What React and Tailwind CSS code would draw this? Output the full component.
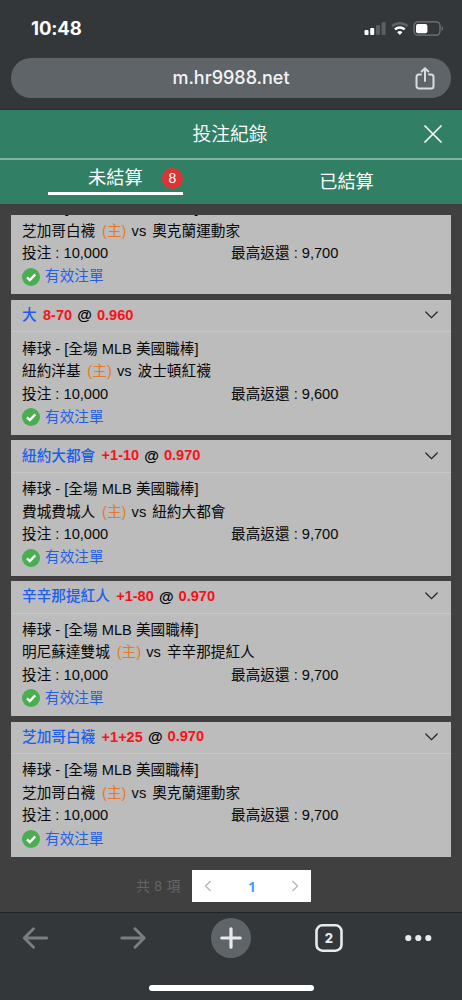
import React from 'react';

const bets = [
  { pick: '大', line: '8-70', odds: '0.960', home: '紐約洋基', away: '波士頓紅襪', max: '9,600' },
  { pick: '紐約大都會', line: '+1-10', odds: '0.970', home: '費城費城人', away: '紐約大都會', max: '9,700' },
  { pick: '辛辛那提紅人', line: '+1-80', odds: '0.970', home: '明尼蘇達雙城', away: '辛辛那提紅人', max: '9,700' },
  { pick: '芝加哥白襪', line: '+1+25', odds: '0.970', home: '芝加哥白襪', away: '奧克蘭運動家', max: '9,700' },
];

const scrolledBet = { home: '芝加哥白襪', away: '奧克蘭運動家', max: '9,700' };

function StatusBar() {
  return (
    <div className="flex h-[57px] shrink-0 items-center justify-between pl-[31px] pr-[18px] font-['Inter',sans-serif]">
      <span className="text-[18.5px] font-bold leading-none tracking-[-0.1px] text-white">10:48</span>
      <svg width="80" height="18" viewBox="0 0 80 18" fill="none">
        <rect x="0.5" y="10" width="4" height="5" rx="1" fill="#fff" />
        <rect x="6.2" y="8" width="4" height="7" rx="1" fill="#fff" />
        <rect x="12" y="5" width="4" height="10" rx="1" fill="#5c5f61" />
        <rect x="17.6" y="2.3" width="4" height="12.7" rx="1" fill="#5c5f61" />
        <path d="M28 6.2a12 12 0 0 1 15.6 0" stroke="#606365" strokeWidth="2.5" />
        <path d="M30.9 9.4a7.6 7.6 0 0 1 9.8 0" stroke="#fff" strokeWidth="2.5" />
        <path d="M35.8 15l-2.6-2.8a4 4 0 0 1 5.2 0z" fill="#fff" />
        <rect x="50" y="1.9" width="26" height="13.2" rx="3.8" stroke="#75787a" strokeWidth="1.2" />
        <rect x="52" y="3.9" width="11.4" height="9.4" rx="2" fill="#fff" />
        <path d="M77.7 6.2c1.8.8 1.8 3.8 0 4.6z" fill="#75787a" />
      </svg>
    </div>
  );
}

function AddressBar() {
  return (
    <div className="mx-[11px] mt-px grid h-10 shrink-0 grid-cols-[1fr_auto_1fr] items-center rounded-full bg-[#5f6468] pr-4">
      <span />
      <span className="pl-4 font-['Inter',sans-serif] text-[18px] font-medium leading-none text-[#f3f4f5]">m.hr9988.net</span>
      <svg className="mt-[2px] justify-self-end" width="20" height="24" viewBox="0 0 20 24" fill="none" stroke="#dadde0" strokeWidth="2" strokeLinecap="round" strokeLinejoin="round">
        <path d="M6 7.5H4a2.5 2.5 0 0 0-2.5 2.5v9A2.5 2.5 0 0 0 4 21.5h12a2.5 2.5 0 0 0 2.5-2.5v-9A2.5 2.5 0 0 0 16 7.5h-2M10 14V1.5M6.7 4.5L10 1.3l3.3 3.2" />
      </svg>
    </div>
  );
}

function Header() {
  return (
    <header className="shrink-0 bg-[#318065] text-white">
      <div className="grid h-[50px] grid-cols-[1fr_auto_1fr] items-center border-b-2 border-[#83b2a2] pr-[20px]">
        <span />
        <h1 className="pl-[18px] pt-0.5 text-[18.8px] font-[350] leading-none">投注紀錄</h1>
        <svg className="justify-self-end" width="18" height="18" viewBox="0 0 18 18" fill="none" stroke="#fff" strokeWidth="1.7" strokeLinecap="round">
          <path d="M1 1l16 16M17 1L1 17" />
        </svg>
      </div>
      <div className="grid h-[44px] grid-cols-2 text-[18.2px] leading-none">
        <div className="flex justify-center pt-[3px]">
          <div className="flex h-8 w-[135px] items-center justify-between border-b-[3px] border-white pl-10 pt-px">
            <span className="whitespace-nowrap leading-6">未結算</span>
            <span className="flex size-[21px] shrink-0 items-center justify-center rounded-full bg-[#dc3535] text-[14px]">8</span>
          </div>
        </div>
        <div className="flex items-center justify-center">已結算</div>
      </div>
    </header>
  );
}

function BetDetails({ bet, league }) {
  return (
    <div className="px-[11px] pb-[6.5px] pt-[5.3px] text-[14.65px] leading-[22.5px] text-[#080808]">
      <p>{league}</p>
      <p className="flex">
        <span>{bet.home}</span>
        <span className="ml-[6.8px] text-[#e47a25]">(主)</span>
        <span className="ml-[5.2px]">vs</span>
        <span className="ml-1.5">{bet.away}</span>
      </p>
      <div className="grid grid-cols-2">
        <span>投注 : 10,000</span>
        <span>最高返還 : {bet.max}</span>
      </div>
      <p className="flex items-center pt-[0.8px] text-[#235fe8]">
        <svg className="mr-[5px]" width="18" height="18" viewBox="0 0 18 18" fill="none">
          <circle cx="9" cy="9" r="9" fill="#48ae50" />
          <path d="M5 9.3l2.8 2.7L13.3 6.3" stroke="#fff" strokeWidth="2.4" />
        </svg>
        <span>有效注單</span>
      </p>
    </div>
  );
}

function BetCard({ bet }) {
  return (
    <article className="flex h-[135.3px] shrink-0 flex-col bg-[#bcbcbc]">
      <div className="flex h-[32.5px] shrink-0 items-center border-b-[1.5px] border-[#c8c8c8] pl-[11px] pr-[13px] text-[14.65px]">
        <span className="pt-px font-medium text-[#1b5ff0]">{bet.pick}</span>
        <span className="ml-[6.4px] text-[14.5px] font-bold text-[#fb1018]">{bet.line}</span>
        <span className="ml-[5.2px] text-[15px] font-bold text-black">@</span>
        <span className="ml-[5px] text-[14.6px] font-bold text-[#fb1018]">{bet.odds}</span>
        <svg className="-mt-px ml-auto" width="13" height="8" viewBox="0 0 13 8" fill="none" stroke="#222" strokeWidth="1.2" strokeLinecap="round">
          <path d="M0.8 1l5.7 5.7L12.2 1" />
        </svg>
      </div>
      <BetDetails bet={bet} league="棒球 - [全場 MLB 美國職棒]" />
    </article>
  );
}

function Pagination() {
  return (
    <div className="flex h-[55px] shrink-0 items-start pl-[136px] pt-[13px]">
      <span className="w-[56.4px] text-[13.9px] leading-8 tracking-[0.3px] text-[#666]">共 8 項</span>
      <div className="flex h-8 w-[119px] items-center justify-between bg-white px-3">
        <svg width="8" height="12" viewBox="0 0 8 12" fill="none" stroke="#b5b5b5" strokeWidth="1.3">
          <path d="M6.5 1L1.5 6l5 5" />
        </svg>
        <span className="font-['Open_Sans',sans-serif] text-[14px] font-bold text-[#409eff]">1</span>
        <svg width="8" height="12" viewBox="0 0 8 12" fill="none" stroke="#b5b5b5" strokeWidth="1.3">
          <path d="M1.5 1l5 5-5 5" />
        </svg>
      </div>
    </div>
  );
}

function BottomBar() {
  return (
    <footer className="flex h-[88px] flex-col items-center border-t border-[#222527] bg-[#34373a]">
      <div className="flex h-[50px] w-full shrink-0 items-center pl-[21px]">
        <svg width="28" height="24" viewBox="0 0 28 24" fill="none" stroke="#7b7e80" strokeWidth="2.9" strokeLinecap="round" strokeLinejoin="round">
          <path d="M25.7 12H3.5M12.5 2.8L3.3 12l9.2 9.2" />
        </svg>
        <svg className="ml-[70px]" width="28" height="24" viewBox="0 0 28 24" fill="none" stroke="#7b7e80" strokeWidth="2.9" strokeLinecap="round" strokeLinejoin="round">
          <path d="M2.8 12h22.2M16 2.8l9.2 9.2-9.2 9.2" />
        </svg>
        <svg className="ml-16" width="40" height="40" viewBox="0 0 40 40" fill="none">
          <circle cx="20" cy="20" r="20" fill="#5f6468" />
          <path d="M10.8 20h18.4M20 10.8v18.4" stroke="#e8eaed" strokeWidth="3.2" strokeLinecap="round" />
        </svg>
        <span className="ml-16 grid size-7 place-items-center font-['Inter',sans-serif] text-[13px] font-extrabold leading-none text-[#e8eaed]">
          <svg className="col-start-1 row-start-1" width="28" height="28" viewBox="0 0 28 28" fill="none" stroke="#e8eaed" strokeWidth="2.6">
            <rect x="1.5" y="1.3" width="25" height="25.4" rx="6" />
          </svg>
          <span className="col-start-1 row-start-1">2</span>
        </span>
        <svg className="ml-[61px]" width="28" height="8" viewBox="0 0 28 8" fill="#e8eaed">
          <circle cx="4.3" cy="4" r="3.1" />
          <circle cx="14.3" cy="4" r="3.1" />
          <circle cx="24.3" cy="4" r="3.1" />
        </svg>
      </div>
      <div className="mt-[22px] h-[6px] w-[165px] rounded-full bg-white" />
    </footer>
  );
}

export default function App() {
  return (
    <div className="flex h-[1000px] w-[462px] flex-col overflow-hidden bg-[#404040] font-['Liberation_Sans','Noto_Sans_CJK_TC',sans-serif]">
      <div className="flex h-[110px] shrink-0 flex-col border-b border-[#20302b] bg-[#34373a]">
        <StatusBar />
        <AddressBar />
      </div>
      <Header />
      <main className="mx-[11px] mt-[11px] flex h-[642px] shrink-0 flex-col gap-[5.35px]">
        <article className="flex h-[79.4px] shrink-0 flex-col justify-end overflow-hidden bg-[#bcbcbc]">
          <BetDetails bet={scrolledBet} league="棒球 - [全場 MLB 美國職棒]" />
        </article>
        {bets.map((bet) => (
          <BetCard key={bet.pick} bet={bet} />
        ))}
      </main>
      <Pagination />
      <BottomBar />
    </div>
  );
}
